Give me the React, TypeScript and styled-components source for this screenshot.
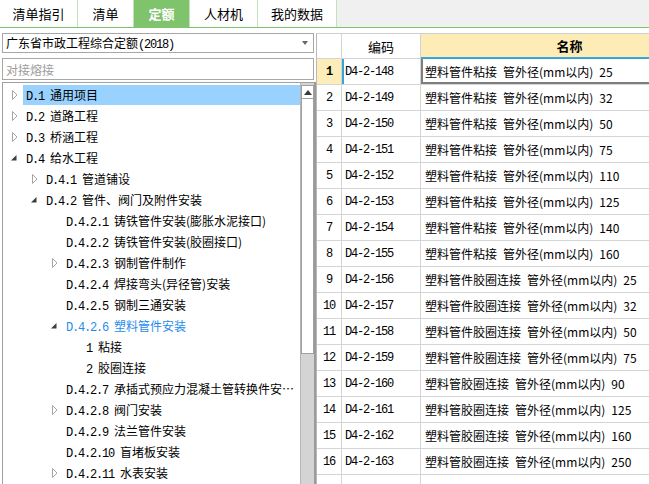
import React from 'react';
import styled, { createGlobalStyle } from 'styled-components';

const GlobalStyle = createGlobalStyle`
  html, body {
    margin: 0;
    padding: 0;
    background: #fff;
  }
  body {
    font: 12px "Noto Sans CJK SC", sans-serif;
    color: #000;
  }
  * {
    box-sizing: border-box;
  }
`;

const Page = styled.div`
  width: 649px;
  height: 484px;
  overflow: hidden;
  display: flex;
  flex-direction: column;
  background: #fff;
`;

const TabBar = styled.div`
  display: flex;
  height: 28px;
  background: #f0f0f0;
  border-bottom: 1px solid #7cc46a;
  flex-shrink: 0;
`;

const Tab = styled.div<{ $w: number; $active?: boolean }>`
  width: ${(p) => p.$w}px;
  display: flex;
  align-items: center;
  justify-content: center;
  font-size: 13px;
  background: ${(p) => (p.$active ? '#7fc36d' : '#fff')};
  color: ${(p) => (p.$active ? '#fff' : '#000')};
  font-weight: ${(p) => (p.$active ? 700 : 400)};
  border-right: 1px solid #c4e2bb;
`;

const Body = styled.div`
  flex: 1;
  min-height: 0;
  display: flex;
`;

const LeftPane = styled.div`
  width: 316px;
  flex-shrink: 0;
  display: flex;
  flex-direction: column;
  padding: 5px 0 0 2px;
`;

const Select = styled.div`
  width: 312px;
  height: 20px;
  border: 1px solid #a7a7a7;
  display: flex;
  align-items: center;
  justify-content: space-between;
  padding: 0 5px 0 3px;
  white-space: nowrap;
`;

const SelectArrow = styled.span`
  width: 0;
  height: 0;
  border-left: 3px solid transparent;
  border-right: 3px solid transparent;
  border-top: 4px solid #666;
`;

const Search = styled.div`
  width: 312px;
  height: 22px;
  margin-top: 5px;
  border: 1px solid #a7a7a7;
  display: flex;
  align-items: center;
  padding-left: 3px;
  color: #9c9c9c;
`;

const TreeBox = styled.div`
  flex: 1;
  min-height: 0;
  margin-top: 2px;
  width: 314px;
  display: flex;
  border-top: 1px solid #a0a0a0;
  border-left: 1px solid #a0a0a0;
  border-right: 2px solid #9a9a9a;
`;

const TreeList = styled.div`
  flex: 1;
  min-width: 0;
  padding-top: 1px;
  overflow: hidden;
`;

const TreeRow = styled.div<{ $level: number }>`
  height: 21px;
  display: flex;
  align-items: center;
  padding-left: ${(p) => 7 + p.$level * 20}px;
`;

const Toggle = styled.svg`
  width: 13px;
  height: 21px;
  flex-shrink: 0;
`;

const Label = styled.div<{ $selected?: boolean; $active?: boolean }>`
  flex: 1;
  min-width: 0;
  height: 20px;
  line-height: 20px;
  padding: 0 2px 0 3px;
  white-space: nowrap;
  overflow: hidden;
  text-overflow: ellipsis;
  background: ${(p) => (p.$selected ? '#99d1ff' : 'transparent')};
  color: ${(p) => (p.$active ? '#1f8ceb' : '#000')};
`;

const Code = styled.span`
  font-family: "Liberation Mono", "Noto Sans CJK SC", monospace;
  font-size: 12px;
  letter-spacing: -1.2px;
`;

const ScrollBar = styled.div`
  width: 14px;
  flex-shrink: 0;
  background: #d4d4d4;
  padding-top: 2px;
  display: flex;
  flex-direction: column;
  border-left: 1px solid #b4b4b4;
`;

const ScrollButton = styled.div`
  height: 14px;
  background: #fff;
  border: 1px solid #a0a0a0;
  display: flex;
  align-items: center;
  justify-content: center;
`;

const UpArrow = styled.span`
  width: 0;
  height: 0;
  border-left: 4px solid transparent;
  border-right: 4px solid transparent;
  border-bottom: 5px solid #3c3c3c;
`;

const Thumb = styled.div`
  height: 255px;
  background: #fff;
  border: 1px solid #a0a0a0;
  border-top: none;
`;

const RightPane = styled.div`
  flex: 1;
  min-width: 0;
  padding-top: 5px;
  overflow: hidden;
`;

const Grid = styled.div`
  display: grid;
  grid-template-columns: 25px 79px 298px;
  grid-template-rows: 25px;
  grid-auto-rows: 26px;
  width: 403px;
  border-top: 1px solid #cfcfcf;
  border-left: 1px solid #b8b8b8;
`;

const Cell = styled.div<{ $current?: boolean }>`
  display: flex;
  align-items: center;
  padding-left: 3px;
  border-right: 1px solid #d4d4d4;
  border-bottom: 1px solid #d4d4d4;
  white-space: pre;
  overflow: hidden;
`;

const HeadCell = styled(Cell)<{ $focus?: boolean }>`
  justify-content: center;
  padding-left: 0;
  font-size: 13px;
  background: ${(p) => (p.$focus ? '#fdecb5' : '#fff')};
  font-weight: ${(p) => (p.$focus ? 700 : 400)};
  border-bottom: ${(p) => (p.$focus ? '2px solid #38a5d8' : '1px solid #d4d4d4')};
`;

const NumCell = styled(Cell)`
  justify-content: center;
  padding-left: 0;
  background: ${(p) => (p.$current ? '#fdedb8' : '#fff')};
  font-weight: ${(p) => (p.$current ? 700 : 400)};
`;

const CodeCell = styled(Cell)`
  box-shadow: ${(p) => (p.$current ? 'inset 2px 0 0 #38a5d8' : 'none')};
`;

const NameCell = styled(Cell)`
  padding-left: 4px;
  box-shadow: ${(p) => (p.$current ? 'inset 2px -2px 0 #7f7f7f' : 'none')};
`;

type Node = {
  level: number;
  code: string;
  name: string;
  toggle?: 'open' | 'closed';
  selected?: boolean;
  active?: boolean;
};

const tree: Node[] = [
  { level: 0, code: 'D.1', name: '通用项目', toggle: 'closed', selected: true },
  { level: 0, code: 'D.2', name: '道路工程', toggle: 'closed' },
  { level: 0, code: 'D.3', name: '桥涵工程', toggle: 'closed' },
  { level: 0, code: 'D.4', name: '给水工程', toggle: 'open' },
  { level: 1, code: 'D.4.1', name: '管道铺设', toggle: 'closed' },
  { level: 1, code: 'D.4.2', name: '管件、阀门及附件安装', toggle: 'open' },
  { level: 2, code: 'D.4.2.1', name: '铸铁管件安装(膨胀水泥接口)' },
  { level: 2, code: 'D.4.2.2', name: '铸铁管件安装(胶圈接口)' },
  { level: 2, code: 'D.4.2.3', name: '钢制管件制作', toggle: 'closed' },
  { level: 2, code: 'D.4.2.4', name: '焊接弯头(异径管)安装' },
  { level: 2, code: 'D.4.2.5', name: '钢制三通安装' },
  { level: 2, code: 'D.4.2.6', name: '塑料管件安装', toggle: 'open', active: true },
  { level: 3, code: '1', name: '粘接' },
  { level: 3, code: '2', name: '胶圈连接' },
  { level: 2, code: 'D.4.2.7', name: '承插式预应力混凝土管转换件安…' },
  { level: 2, code: 'D.4.2.8', name: '阀门安装', toggle: 'closed' },
  { level: 2, code: 'D.4.2.9', name: '法兰管件安装' },
  { level: 2, code: 'D.4.2.10', name: '盲堵板安装' },
  { level: 2, code: 'D.4.2.11', name: '水表安装', toggle: 'closed' },
];

const sizes = ['25', '32', '50', '75', '110', '125', '140', '160', '25', '32', '50', '75', '90', '125', '160', '250'];

const rows = sizes.map((size, i) => {
  const prefix = i < 8 ? '塑料管件粘接' : i < 12 ? '塑料管件胶圈连接' : '塑料管胶圈连接';
  return { code: `D4-2-${148 + i}`, name: `${prefix}\u2002管外径(mm以内)\u2002${size}` };
});

const tabs = [
  { label: '清单指引', w: 78 },
  { label: '清单', w: 56 },
  { label: '定额', w: 56, active: true },
  { label: '人材机', w: 68 },
  { label: '我的数据', w: 79 },
];

const ToggleIcon = ({ kind }: { kind?: 'open' | 'closed' }) => (
  <Toggle viewBox="0 0 13 21">
    {kind === 'closed' && (
      <polygon points="2.5,6.5 2.5,15.5 7,11" fill="#fff" stroke="#a6a6a6" strokeWidth="1" />
    )}
    {kind === 'open' && <polygon points="1,13.5 6.5,13.5 6.5,8" fill="#3c3c3c" />}
  </Toggle>
);

export default function App() {
  return (
    <Page>
      <GlobalStyle />
      <TabBar>
        {tabs.map((t) => (
          <Tab key={t.label} $w={t.w} $active={t.active}>
            {t.label}
          </Tab>
        ))}
      </TabBar>
      <Body>
        <LeftPane>
          <Select>
            <span>
              广东省市政工程综合定额<Code>(2018)</Code>
            </span>
            <SelectArrow />
          </Select>
          <Search>对接熔接</Search>
          <TreeBox>
            <TreeList>
              {tree.map((n) => (
                <TreeRow key={n.code} $level={n.level}>
                  <ToggleIcon kind={n.toggle} />
                  <Label $selected={n.selected} $active={n.active}>
                    <Code>{n.code}&nbsp;</Code>
                    {n.name}
                  </Label>
                </TreeRow>
              ))}
            </TreeList>
            <ScrollBar>
              <ScrollButton>
                <UpArrow />
              </ScrollButton>
              <Thumb />
            </ScrollBar>
          </TreeBox>
        </LeftPane>
        <RightPane>
          <Grid>
            <HeadCell />
            <HeadCell>编码</HeadCell>
            <HeadCell $focus>名称</HeadCell>
            {rows.map((r, i) => (
              <React.Fragment key={r.code}>
                <NumCell $current={i === 0}>
                  <Code>{i + 1}</Code>
                </NumCell>
                <CodeCell $current={i === 0}>
                  <Code>{r.code}</Code>
                </CodeCell>
                <NameCell $current={i === 0}>{r.name}</NameCell>
              </React.Fragment>
            ))}
            <NumCell />
            <CodeCell />
            <NameCell />
          </Grid>
        </RightPane>
      </Body>
    </Page>
  );
}
